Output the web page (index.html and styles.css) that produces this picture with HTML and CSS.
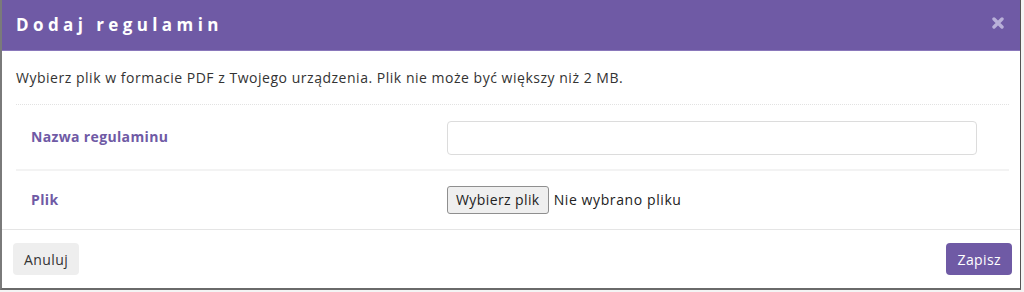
FILE: index.html
```html
<!DOCTYPE html>
<html lang="pl">

<head>
  <meta charset="UTF-8">
  <meta name="viewport" content="width=device-width, initial-scale=1.0">
  <title>Dodaj regulamin</title>
  <link rel="stylesheet" href="styles.css">
</head>

<body>
  <div class="modal">
    <div class="modal-header">
      <h4 class="modal-title">Dodaj regulamin</h4>
      <button class="close" type="button">
        <svg width="12" height="12" viewBox="0 0 12 12">
          <path d="M2 2 L10 10 M10 2 L2 10" stroke="#b9b0d9" stroke-width="3.4" stroke-linecap="round" />
        </svg>
      </button>
    </div>

    <div class="modal-body">
      <p class="hint">Wybierz plik w formacie PDF z Twojego urządzenia. Plik nie może być większy niż 2 MB.</p>
      <div class="form-row first">
        <label class="form-label" for="name">Nazwa regulaminu</label>
        <div class="form-field">
          <input id="name" class="text-input" type="text" />
        </div>
      </div>
      <div class="form-row">
        <label class="form-label">Plik</label>
        <div class="form-field">
          <span class="file-btn">Wybierz plik</span>
          <span class="file-name">Nie wybrano pliku</span>
        </div>
      </div>
    </div>

    <div class="modal-footer">
      <button class="btn btn-default" type="button">Anuluj</button>
      <button class="btn btn-primary" type="button">Zapisz</button>
    </div>
  </div>
</body>

</html>
```

FILE: styles.css
```css
body {
  margin: 0;
  padding: 0;
  background: #f4f4f4;
  font-family: "Open Sans", "Liberation Sans", sans-serif;
  color: #333;
}

.modal {
  width: 1018px;
  height: 288px;
  background: #fff;
  border-left: 2px solid #7a7a7a;
  border-right: 1px solid #555;
  border-bottom: 2px solid #6a6a6a;
  display: flex;
  flex-direction: column;
}

.modal-header {
  background: #6f5aa5;
  height: 52px;
  border-bottom: 1px solid #8a78bb;
  box-sizing: border-box;
  display: flex;
  align-items: center;
  justify-content: space-between;
  padding: 0 16px 0 14px;
}

.modal-title {
  margin: 0;
  color: #fff;
  font-size: 17px;
  font-weight: 700;
  letter-spacing: 4.4px;
}

.close {
  border: 0;
  background: transparent;
  padding: 0;
  margin: 0 0 3px 0;
  display: flex;
}

.modal-body {
  padding: 0 11px 0 14px;
  flex: 1;
}

.hint {
  margin: 0;
  height: 53px;
  display: flex;
  align-items: center;
  font-size: 14px;
  letter-spacing: 0.52px;
  padding-top: 1px;
  box-sizing: border-box;
}

.form-row {
  display: flex;
  align-items: center;
  border-top: 2px solid #f3f3f3;
  height: 58px;
}

.form-row.first {
  border-top: 1px dotted #e2e2e2;
  height: 64px;
}

.form-label {
  width: 416px;
  padding-left: 15px;
  color: #6f5aa5;
  font-weight: 700;
  font-size: 14px;
  letter-spacing: 0.35px;
}

.form-field {
  display: flex;
  align-items: center;
}

.text-input {
  width: 530px;
  height: 34px;
  box-sizing: border-box;
  border: 1px solid #dcdcdc;
  border-radius: 4px;
  margin-top: 2px;
}

.file-btn {
  background: #efefef;
  border: 1px solid #8f8f8f;
  border-radius: 3px;
  font-size: 14px;
  letter-spacing: 0.4px;
  padding: 0 8px;
  height: 28px;
  line-height: 26px;
  box-sizing: border-box;
  color: #222;
}

.file-name {
  font-size: 14px;
  letter-spacing: 0.6px;
  margin-left: 5px;
  color: #222;
}

.modal-footer {
  border-top: 1px solid #e5e5e5;
  height: 60px;
  display: flex;
  align-items: center;
  justify-content: space-between;
  padding: 0 8px 0 11px;
}

.btn {
  border: 0;
  border-radius: 4px;
  height: 32px;
  font-family: "Open Sans", "Liberation Sans", sans-serif;
  font-size: 14px;
  letter-spacing: 0.4px;
  padding: 0 11px;
  margin-top: 1px;
}

.btn-default {
  background: #eeeeee;
  color: #333;
}

.btn-primary {
  background: #6f5aa5;
  color: #fff;
}
```
